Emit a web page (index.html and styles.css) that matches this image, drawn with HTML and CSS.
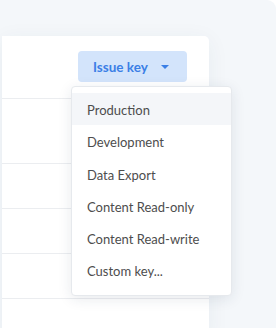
FILE: index.html
```html
<!DOCTYPE html>
<html>
<head>
<meta charset="utf-8">
<link rel="stylesheet" href="styles.css">
</head>
<body>
<div class="frame">
  <div class="card">
    <div class="card-head">
      <button class="issue-btn">Issue key <span class="caret"></span></button>
    </div>
    <div class="row row-tall"></div>
    <div class="row"></div>
    <div class="row"></div>
    <div class="row"></div>
    <div class="row"></div>
  </div>
  <ul class="menu">
    <li class="menu-item active">Production</li>
    <li class="menu-item">Development</li>
    <li class="menu-item">Data Export</li>
    <li class="menu-item">Content Read-only</li>
    <li class="menu-item">Content Read-write</li>
    <li class="menu-item">Custom key...</li>
  </ul>
</div>
</body>
</html>
```

FILE: styles.css
```css
html, body {
  margin: 0;
  padding: 0;
  background: #ffffff;
}
body {
  width: 276px;
  height: 328px;
  overflow: hidden;
  font-family: Lato, "Noto Sans", sans-serif;
}
.frame {
  position: relative;
  width: 276px;
  height: 328px;
  box-sizing: border-box;
  background: #f4f7fa;
  border-top-right-radius: 9px;
  padding: 36px 0 0 2px;
  overflow: hidden;
}
.card {
  width: 207px;
  height: 300px;
  background: #ffffff;
  border-top-right-radius: 5px;
  box-shadow: 0 4px 22px rgba(40, 60, 90, 0.06);
}
.card-head {
  height: 62px;
  display: flex;
  justify-content: flex-end;
  align-items: flex-start;
  padding: 15px 22px 0 0;
  box-sizing: border-box;
}
.issue-btn {
  width: 109px;
  height: 31px;
  border: none;
  border-radius: 4px;
  background: #d3e4fb;
  color: #3b7fe6;
  font-family: Lato, "Noto Sans", sans-serif;
  font-size: 13.5px;
  font-weight: 700;
  display: flex;
  align-items: center;
  padding: 0 0 0 15px;
  gap: 13px;
}
.caret {
  width: 0;
  height: 0;
  border-left: 4px solid transparent;
  border-right: 4px solid transparent;
  border-top: 4px solid #3b7fe6;
  margin-top: 1px;
}
.row {
  height: 44px;
  border-top: 1px solid #ebedf0;
}
.row-tall {
  height: 64px;
}
.menu {
  position: absolute;
  left: 71px;
  top: 86px;
  width: 161px;
  height: 210px;
  box-sizing: border-box;
  margin: 0;
  padding: 6px 0 0 0;
  list-style: none;
  background: #ffffff;
  border: 1px solid #e6e9ed;
  border-radius: 4px;
  box-shadow: 0 3px 14px rgba(30, 50, 80, 0.10);
}
.menu-item {
  box-sizing: border-box;
  height: 32.3px;
  line-height: 31px;
  padding: 2px 0 0 15px;
  font-size: 13px;
  color: #4d4d4d;
}
.menu-item.active {
  background: #f4f6f9;
}
```
